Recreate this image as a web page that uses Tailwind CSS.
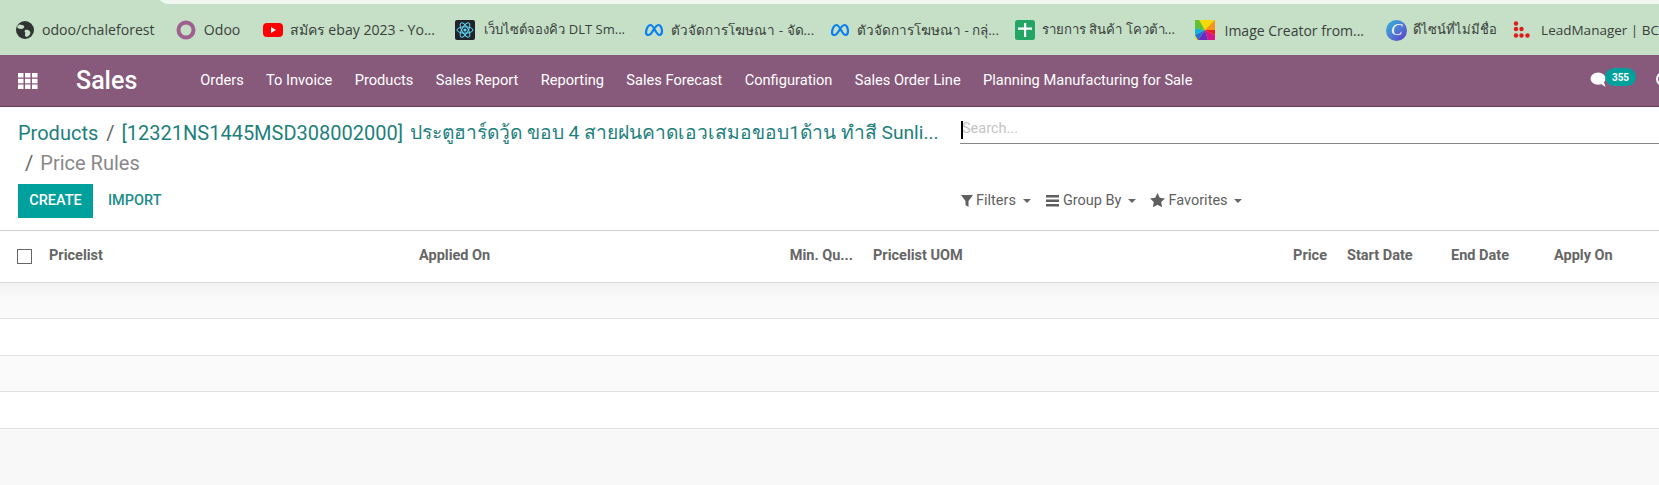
<!DOCTYPE html>
<html lang="th">
<head>
  <meta charset="UTF-8" />
  <title>Price Rules - Odoo</title>
  <script src="https://cdn.jsdelivr.net/npm/@tailwindcss/browser@4"></script>
</head>
<body class="w-[1659px] h-[485px] overflow-hidden bg-[#f8f8f8] font-['Roboto',sans-serif]">

  <!-- Bookmarks bar -->
  <div class="relative h-[55px] bg-[#c5e0c7] overflow-hidden">
    <div class="absolute left-[157px] right-0 top-[-8px] h-[12px] bg-[#f0f7f1] rounded-bl-[14px]"></div>
    <div class="flex items-center h-[60px] pl-[16px] text-[13.5px] text-[#3a3f3b] font-['Open_Sans','Noto_Sans',sans-serif] whitespace-nowrap">
      <div class="w-[160px] flex items-center gap-[8px]">
        <svg class="w-[18px] h-[18px]" viewBox="0 0 18 18"><circle cx="9" cy="9" r="9" fill="#2f3432"/><path d="M3 3.500c2 .5 4 0 5 1.500s-1 3-3 3-3.500-1-4-2zM9 9c2-.5 4 0 5 1.500s0 3-1.500 4.500-3.500 1-3.500-1 1-2-.5-3z" fill="#c5e0c7"/></svg>
        <span class="text-[14.1px]">odoo/chaleforest</span>
      </div>
      <div class="w-[87px] flex items-center gap-[8px]">
        <svg class="w-[20px] h-[20px]" viewBox="0 0 20 20"><circle cx="10" cy="10" r="7.500" fill="none" stroke="#a0608f" stroke-width="4"/></svg>
        <span class="text-[14.1px]">Odoo</span>
      </div>
      <div class="w-[193px] flex items-center gap-[7px]">
        <svg class="w-[20px] h-[20px]" viewBox="0 0 20 20"><rect y="3" width="20" height="14" rx="4" fill="#f00"/><path d="M8 7l5 3-5 3z" fill="#fff"/></svg>
        <span class="text-[14.1px]">สมัคร ebay 2023 - Yo...</span>
      </div>
      <div class="w-[189px] flex items-center gap-[9px]">
        <svg class="w-[20px] h-[20px]" viewBox="0 0 20 20"><rect width="20" height="20" rx="2" fill="#20232a"/><g fill="none" stroke="#61dafb" stroke-width="1"><ellipse cx="10" cy="10" rx="8" ry="3.200"/><ellipse cx="10" cy="10" rx="8" ry="3.200" transform="rotate(60 10 10)"/><ellipse cx="10" cy="10" rx="8" ry="3.200" transform="rotate(120 10 10)"/></g><circle cx="10" cy="10" r="1.600" fill="#61dafb"/></svg>
        <span class="text-[13px]">เว็บไซต์จองคิว DLT Sm...</span>
      </div>
      <div class="w-[186px] flex items-center gap-[7px]">
        <svg class="w-[20px] h-[14px]" viewBox="0 0 20 14"><path d="M2 10c0-4 2-8 4.500-8 3.500 0 5.500 10 9 10 2 0 2.500-2 2.500-4 0-3-1.500-6-3.500-6-2.500 0-4.500 4-6 6.500-1.500 2.500-2.500 3.500-4 3.500-1.500 0-2.500-1-2.500-2z" fill="none" stroke="#0a7ff0" stroke-width="2.200"/></svg>
        <span>ตัวจัดการโฆษณา - จัด...</span>
      </div>
      <div class="w-[185px] flex items-center gap-[7px]">
        <svg class="w-[20px] h-[14px]" viewBox="0 0 20 14"><path d="M2 10c0-4 2-8 4.500-8 3.500 0 5.500 10 9 10 2 0 2.500-2 2.500-4 0-3-1.500-6-3.500-6-2.500 0-4.500 4-6 6.500-1.500 2.500-2.500 3.500-4 3.500-1.500 0-2.500-1-2.500-2z" fill="none" stroke="#0a7ff0" stroke-width="2.200"/></svg>
        <span>ตัวจัดการโฆษณา - กลุ่...</span>
      </div>
      <div class="w-[180px] flex items-center gap-[7px]">
        <svg class="w-[20px] h-[20px]" viewBox="0 0 20 20"><rect width="20" height="20" rx="2.500" fill="#23a566"/><path d="M3 7.500h6V3h2.200v4.500H17v2.200h-5.800V17H9V9.700H3z" fill="#fff"/></svg>
        <span class="text-[13.2px]">รายการ สินค้า โควต้า...</span>
      </div>
      <div class="w-[192px] flex items-center gap-[10px]">
        <svg class="w-[20px] h-[20px]" viewBox="0 0 20 20"><rect width="20" height="20" rx="3" fill="#f5d90a"/><path d="M10 10L20 0V10z" fill="#f7941d"/><path d="M10 10H20V15z" fill="#ed1c24"/><path d="M10 10L20 15V20H13z" fill="#d6168b"/><path d="M10 10L13 20H3z" fill="#6a2bc2"/><path d="M10 10L3 20 0 15z" fill="#1f6fe0"/><path d="M10 10L0 15V8z" fill="#12b5d8"/><path d="M10 10L0 8V0H4z" fill="#5fc136"/></svg>
        <span class="text-[14px]">Image Creator from...</span>
      </div>
      <div class="w-[127px] flex items-center gap-[6px]">
        <div class="w-[21px] h-[21px] rounded-full bg-gradient-to-br from-[#16b8d8] to-[#5a32c8] text-white text-[17px] italic font-['Liberation_Serif',serif] flex items-center justify-center">C</div>
        <span class="text-[13px]">ดีไซน์ที่ไม่มีชื่อ</span>
      </div>
      <div class="flex items-center gap-[9px]">
        <svg class="w-[19px] h-[19px]" viewBox="0 0 19 19" fill="#e01b1b"><circle cx="3" cy="2.500" r="2.200"/><circle cx="3" cy="8" r="2.200"/><circle cx="8.500" cy="8" r="2.200"/><circle cx="3" cy="14.500" r="2.200"/><circle cx="8.500" cy="14.500" r="2.200"/><circle cx="14.500" cy="14.500" r="2.200"/></svg>
        <span>LeadManager | BC</span>
      </div>
    </div>
  </div>

  <!-- Main navbar -->
  <nav class="relative h-[52px] bg-[#875a7b] border-b border-[#5f4057] flex items-center text-white whitespace-nowrap">
    <svg class="ml-[18px] w-[20px] h-[16px]" viewBox="0 0 20 16" fill="#fff">
      <rect x="0" y="0" width="5.500" height="4.500"/><rect x="7" y="0" width="5.500" height="4.500"/><rect x="14" y="0" width="5.500" height="4.500"/>
      <rect x="0" y="5.800" width="5.500" height="4.500"/><rect x="7" y="5.800" width="5.500" height="4.500"/><rect x="14" y="5.800" width="5.500" height="4.500"/>
      <rect x="0" y="11.500" width="5.500" height="4.500"/><rect x="7" y="11.500" width="5.500" height="4.500"/><rect x="14" y="11.500" width="5.500" height="4.500"/>
    </svg>
    <span class="ml-[38px] text-[25px] font-medium">Sales</span>
    <div class="ml-[63px] flex gap-[22.300px] text-[14.650px]">
      <span>Orders</span>
      <span>To Invoice</span>
      <span>Products</span>
      <span>Sales Report</span>
      <span>Reporting</span>
      <span>Sales Forecast</span>
      <span>Configuration</span>
      <span>Sales Order Line</span>
      <span>Planning Manufacturing for Sale</span>
    </div>
    <svg class="absolute left-[1590px] top-[17px] w-[18px] h-[16px]" viewBox="0 0 18 17" fill="#fff"><ellipse cx="8" cy="7" rx="8" ry="6.500"/><path d="M10 12l6 4-2-6z"/></svg>
    <span class="absolute left-[1605px] top-[13px] w-[31px] h-[18px] rounded-full bg-[#00a09d] text-[10px] font-bold flex items-center justify-center">355</span>
    <span class="absolute left-[1656px] top-[17px] w-[14px] h-[14px] rounded-full border-2 border-white"></span>
  </nav>

  <!-- Control panel -->
  <div class="h-[124px] bg-white border-b border-[#cccccc] flex">
    <div class="w-[960px] pl-[18px] shrink-0">
      <div class="h-[30px] mt-[11px] flex items-center text-[20px] text-[#1e7f7d] whitespace-nowrap">
        <span>Products</span>
        <span class="ml-[8px] mr-[7px] text-[#666666]">/</span>
        <span>[12321NS1445MSD308002000]</span>
        <span class="ml-[7px] text-[19.230px]">ประตูฮาร์ดวู้ด ขอบ 4 สายฝนคาดเอวเสมอขอบ1ด้าน ทำสี Sunli...</span>
      </div>
      <div class="h-[30px] flex items-center pl-[7px] text-[20px] text-[#888888]">
        <span class="mr-[7px] text-[#666666]">/</span>
        <span>Price Rules</span>
      </div>
      <div class="mt-[6px] flex items-center gap-[15px] text-[14.500px] font-medium">
        <button class="w-[75px] h-[34px] bg-[#00a09d] text-white">CREATE</button>
        <button class="text-[#1d8c8a]">IMPORT</button>
      </div>
    </div>
    <div class="flex-1">
      <div class="relative h-[37px] border-b border-[#888888] pl-[2px] flex items-end pb-[3px] text-[14.500px] text-[#c4c4c4]">
        <span class="absolute left-[1px] top-[14px] w-[2px] h-[18px] bg-black"></span>
        <span>Search...</span>
      </div>
      <div class="mt-[46px] flex items-center text-[14.500px] text-[#5f5f5f] whitespace-nowrap">
        <svg class="ml-[1px] w-[12px] h-[12px]" viewBox="0 0 12 12" fill="#5f5f5f"><path d="M0 0h12L7.500 6v6l-3-2V6z"/></svg>
        <span class="ml-[3px]">Filters</span>
        <span class="ml-[7px] border-x-[4px] border-x-transparent border-t-[4px] border-t-[#666666]"></span>
        <svg class="ml-[15px] w-[13px] h-[12px]" viewBox="0 0 13 12" fill="#5f5f5f"><rect width="13" height="2.500"/><rect y="4.500" width="13" height="2.500"/><rect y="9" width="13" height="2.500"/></svg>
        <span class="ml-[4px]">Group By</span>
        <span class="ml-[7px] border-x-[4px] border-x-transparent border-t-[4px] border-t-[#666666]"></span>
        <svg class="ml-[14px] mb-[2px] w-[15px] h-[14px]" viewBox="0 0 15 14" fill="#5f5f5f"><path d="M7.500 0l2.300 4.800 5.200.7-3.800 3.600.9 5.200-4.600-2.500-4.600 2.500.9-5.200L0 5.500l5.200-.7z"/></svg>
        <span class="ml-[3px]">Favorites</span>
        <span class="ml-[6px] border-x-[4px] border-x-transparent border-t-[4px] border-t-[#666666]"></span>
      </div>
    </div>
  </div>

  <!-- List header -->
  <div class="h-[52px] pb-[2px] bg-white border-b border-[#dddddd] grid grid-cols-[49px_370px_370px_64px_440px_34px_124px_103px_1fr] items-center text-[14.500px] font-bold text-[#666666] whitespace-nowrap">
    <div class="pl-[17px] pt-[2px]"><div class="w-[15px] h-[15px] border border-[#666666] bg-white"></div></div>
    <div>Pricelist</div>
    <div>Applied On</div>
    <div class="text-right">Min. Qu...</div>
    <div class="pl-[20px]">Pricelist UOM</div>
    <div class="text-right">Price</div>
    <div class="pl-[20px]">Start Date</div>
    <div>End Date</div>
    <div>Apply On</div>
  </div>

  <!-- Empty rows -->
  <div class="h-[36px] bg-gradient-to-b from-[#f1f1f1] to-[#fafafa] to-40% border-b border-[#e2e2e2]"></div>
  <div class="h-[37px] bg-white border-b border-[#e2e2e2]"></div>
  <div class="h-[36px] bg-[#fafafa] border-b border-[#e2e2e2]"></div>
  <div class="h-[37px] bg-white border-b border-[#e2e2e2]"></div>

</body>
</html>
